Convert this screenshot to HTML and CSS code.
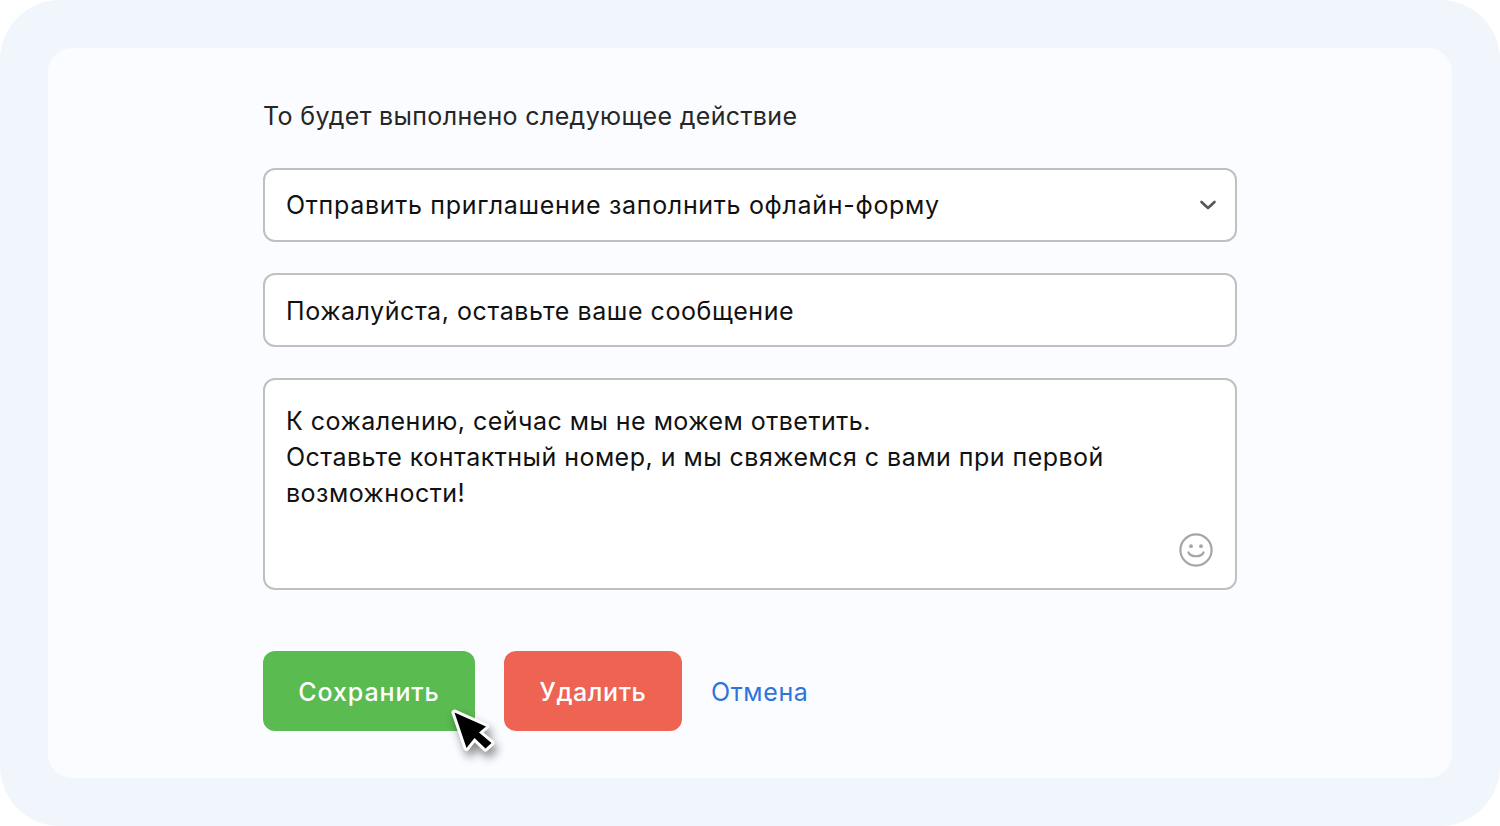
FILE: index.html
```html
<!DOCTYPE html>
<html lang="ru">
<head>
<meta charset="utf-8">
<title>Действие</title>
<link rel="stylesheet" href="styles.css">
</head>
<body>
<main class="frame">
  <section class="panel">
    <form class="form">
      <p class="label">То будет выполнено следующее действие</p>
      <div class="field select">
        <span>Отправить приглашение заполнить офлайн-форму</span>
        <svg class="chevron" width="18" height="12" viewBox="0 0 18 12" aria-hidden="true"><path d="M2.5 3 L9 9 L15.5 3" fill="none" stroke="#54585c" stroke-width="2.6" stroke-linecap="round" stroke-linejoin="round"/></svg>
      </div>
      <div class="field message">Пожалуйста, оставьте ваше сообщение</div>
      <div class="field area">
        <div>К сожалению, сейчас мы не можем ответить.</div>
        <div>Оставьте контактный номер, и мы свяжемся с вами при первой возможности!</div>
        <svg class="smile" width="36" height="36" viewBox="0 0 36 36" aria-hidden="true">
          <circle cx="18" cy="18" r="15.6" fill="none" stroke="#a3a5a8" stroke-width="2.2"/>
          <circle cx="13" cy="14.2" r="1.9" fill="#a3a5a8"/>
          <circle cx="23" cy="14.2" r="1.9" fill="#a3a5a8"/>
          <path d="M10.5 20.5 C12.5 25.5 23.5 25.5 25.5 20.5" fill="none" stroke="#a3a5a8" stroke-width="2.2" stroke-linecap="round"/>
        </svg>
      </div>
      <div class="actions">
        <div class="save-wrap">
          <button type="button" class="btn save">Сохранить</button>
          <svg class="cursor" width="60" height="66" viewBox="0 0 60 66" aria-hidden="true">
            <path class="cursor-arrow" d="M11.5 9.5 L43 23.5 L36 29.5 L48.5 40 L42.5 45.5 L31.5 35 L23.5 45 Z"/>
          </svg>
        </div>
        <button type="button" class="btn del">Удалить</button>
        <a class="cancel" href="#">Отмена</a>
      </div>
    </form>
  </section>
</main>
</body>
</html>
```

FILE: styles.css
```css
* { box-sizing: border-box; }
html, body { margin: 0; background: #fff; }
body { font-family: Inter, "Liberation Sans", sans-serif; color: #1b1b1b; }
.frame {
  width: 1500px;
  height: 826px;
  padding: 48px;
  background: #f1f6fc;
  border-radius: 60px;
  overflow: hidden;
}
.panel {
  height: 730px;
  background: #fafcff;
  border-radius: 24px;
  display: flex;
  justify-content: center;
}
.form { width: 974px; padding-top: 48px; }
.label {
  margin: 0 0 32px;
  height: 40px;
  line-height: 40px;
  font-size: 25px;
  letter-spacing: .35px;
  color: #262626;
}
.field {
  height: 74px;
  margin-bottom: 31px;
  padding: 0 21px;
  display: flex;
  align-items: center;
  background: #fff;
  border: 2px solid #bfc0c2;
  border-radius: 12px;
  font-size: 25px;
  letter-spacing: .69px;
  color: #111;
}
.select { justify-content: space-between; padding-right: 18px; }
.message { padding-top: 2px; letter-spacing: .56px; }
.chevron { display: block; }
.area {
  position: relative;
  display: block;
  height: 212px;
  margin-bottom: 61px;
  padding: 23px 21px 0;
  line-height: 36px;
  letter-spacing: .48px;
}
.smile { position: absolute; right: 21px; bottom: 20px; }
.actions { display: flex; align-items: center; }
.save-wrap { position: relative; margin-right: 29px; }
.btn {
  display: block;
  height: 80px;
  padding: 2px 0 0;
  border: 0;
  border-radius: 12px;
  font-family: inherit;
  font-size: 25px;
  font-weight: 500;
  letter-spacing: .6px;
  color: #fff;
}
.save { width: 212px; background: #5abb50; letter-spacing: .9px; }
.del { width: 178px; background: #ee6352; margin-right: 29px; }
.cancel { padding-top: 2px; font-size: 25px; letter-spacing: .6px; color: #2f74da; text-decoration: none; }
.cursor {
  position: absolute;
  left: 180px;
  top: 52px;
  filter: drop-shadow(3px 6px 5px rgba(0, 0, 0, .45));
}
.cursor-arrow {
  fill: #000;
  stroke: #fff;
  stroke-width: 6;
  stroke-linejoin: round;
  paint-order: stroke;
}
```
